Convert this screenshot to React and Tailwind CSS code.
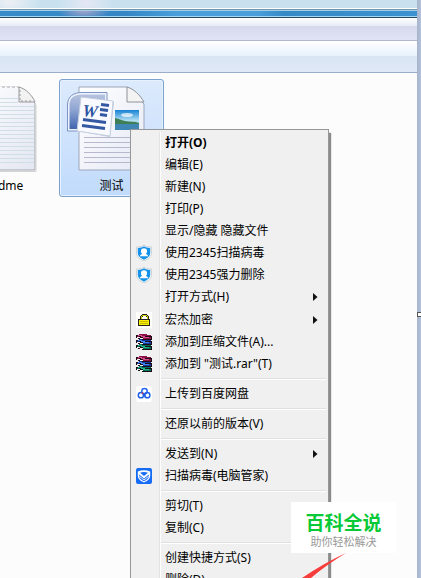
import React from "react";

function ShieldIcon() {
  return (
    <svg width="16" height="16" viewBox="0 0 16 16" aria-hidden="true">
      <path d="M8 .3C6 1.700 3.400 2.100 .7 2v6.200c0 3.500 3 6 7.300 7.600 4.300-1.600 7.300-4.100 7.300-7.600V2C12.600 2.100 10 1.700 8 .3z" fill="#fff" stroke="#b3bec6" strokeWidth=".7" />
      <path d="M8 1.300C6.300 2.500 4.200 2.900 1.800 2.900v5.200c0 3 2.500 5.100 6.200 6.600 3.700-1.500 6.200-3.600 6.200-6.600V2.900C11.800 2.900 9.700 2.500 8 1.300z" fill="#1593ea" />
      <path d="M8 3.300c-1.900 0-3.100 1.200-3.100 3 0 1 .4 1.900 1.100 2.500-.2 1-2.100 1-2.300 2.500h8.600c-.2-1.500-2.100-1.500-2.300-2.500.7-.6 1.100-1.500 1.100-2.500C11.100 4.500 9.900 3.300 8 3.300z" fill="#fff" />
    </svg>
  );
}

function LockIcon() {
  return (
    <svg width="16" height="16" viewBox="0 0 16 16" shapeRendering="crispEdges" aria-hidden="true">
      <rect width="16" height="16" fill="#fff" />
      <path d="M4 8V4h1V3h1V2h5v1h1v1h1v4h-2V5h-1V4H7v1H6v3z" fill="#222" />
      <path d="M5 7V4h1V3h5v1h1v3h-1V4H6v3z" fill="#d8d400" />
      <rect x="2" y="7" width="12" height="7" fill="#222" />
      <rect x="3" y="8" width="10" height="5" fill="#f8f000" />
      <path d="M4 9h8v1H4zm0 2h8v1H4z" fill="#c4b800" />
    </svg>
  );
}

const books = [
  { y: 10, cover: "#00705a", light: "#20b48c" },
  { y: 5, cover: "#1438a0", light: "#3f86f0" },
  { y: 0, cover: "#8c1048", light: "#d8488c" },
];

function BooksIcon() {
  return (
    <svg width="16" height="16" viewBox="0 0 16 16" shapeRendering="crispEdges" aria-hidden="true">
      {books.map((b) => (
        <g key={b.y} transform={`translate(0 ${b.y})`}>
          <path d="M0 1h3V0h8v1h4v1h1v4H6V5H2V4H0z" fill="#1a0d14" />
          <path d="M3 0h8v1h4v1H6V1H3z" fill={b.cover} />
          <path d="M2 1h4v1h3v1H5V2H2z" fill={b.light} />
          <path d="M1 3h3v1h3v1H4V4H1z" fill="#f3f0ea" />
          <path d="M1 2h2v1H1z" fill={b.cover} />
          <path d="M7 3h8v2H7z" fill={b.cover} />
          <path d="M7 3h6v1H7z" fill={b.light} />
        </g>
      ))}
    </svg>
  );
}

function NetdiskIcon() {
  return (
    <svg width="16" height="16" viewBox="0 0 16 16" fill="none" aria-hidden="true">
      <rect width="16" height="16" rx="3" fill="#fff" />
      <circle cx="8.500" cy="5.300" r="2.700" stroke="#2468f2" strokeWidth="1.500" />
      <circle cx="4.900" cy="9.200" r="2.600" stroke="#1f5fe8" strokeWidth="1.500" />
      <circle cx="11.300" cy="9.200" r="2.600" stroke="#1f5fe8" strokeWidth="1.500" />
      <path d="m6.600 7.300 3.200 3.600" stroke="#1f5fe8" strokeWidth="1.300" />
      <circle cx="6.500" cy="7.100" r=".9" fill="#ee3b4d" />
    </svg>
  );
}

function ManagerIcon() {
  return (
    <svg width="16" height="16" viewBox="0 0 16 16" fill="none" aria-hidden="true">
      <rect width="16" height="16" rx="2" fill="#176cf5" />
      <path d="M1.800 3.500Q8 1 14.200 3.500v4.300c0 3-2.800 5.200-6.200 6.600-3.400-1.400-6.200-3.600-6.200-6.600z" fill="#fff" />
      <path d="M4 4.800Q8 3.200 12 4.800L8 7.900z" fill="#176cf5" />
      <path d="M3.200 6.600 8 10.600l4.800-4v1.700c0 2.100-2 3.700-4.800 4.900-2.800-1.200-4.800-2.800-4.800-4.900z" fill="#176cf5" />
      <path d="M3.400 8.300 8 12l4.600-3.700" stroke="#fff" strokeWidth=".9" />
    </svg>
  );
}

function TextFileIcon() {
  return (
    <svg width="84" height="92" viewBox="0 0 84 92" aria-hidden="true">
      <defs>
        <linearGradient id="paper" x1="0" y1="0" x2="1" y2="1">
          <stop offset="0" stopColor="#fff" />
          <stop offset="1" stopColor="#e4e6f2" />
        </linearGradient>
      </defs>
      <path d="M9 4h50l16 16v67H9z" fill="url(#paper)" stroke="#a3a6ac" />
      <path d="M10 88.500h66V22" fill="none" stroke="#d3d3d5" />
      {[15, 19, 23, 27, 31, 35, 39, 43, 47, 51, 55, 59, 63, 67, 71, 75, 79].map((y) => (
        <path key={y} d={`M10 ${y + 0.5}h${y < 22 ? 48 : 64}`} stroke="#cfdfe8" />
      ))}
      <path d="M10 4.500h48" stroke="#fcfcfc" strokeWidth="2" strokeDasharray="2 3" />
      <path d="M59 4v15h16C72 12 66 6 59 4z" fill="#f2f2f3" stroke="#97999d" />
      <path d="M60 7v11h12" fill="none" stroke="#999" strokeDasharray="2 2" />
    </svg>
  );
}

function WordFileIcon() {
  return (
    <svg width="84" height="92" viewBox="0 0 84 92" aria-hidden="true">
      <defs>
        <linearGradient id="sheet" x1="0" y1="0" x2="1" y2="1">
          <stop offset="0" stopColor="#fff" />
          <stop offset="1" stopColor="#e6e9f6" />
        </linearGradient>
        <linearGradient id="badge" x1="0" y1="0" x2="0" y2="1">
          <stop offset="0" stopColor="#b9c5e0" />
          <stop offset=".45" stopColor="#8ea4d2" />
          <stop offset="1" stopColor="#3c62ae" />
        </linearGradient>
        <linearGradient id="sky" x1="0" y1="0" x2="0" y2="1">
          <stop offset="0" stopColor="#1681d4" />
          <stop offset=".55" stopColor="#b8e3f4" />
          <stop offset="1" stopColor="#5fa8c8" />
        </linearGradient>
      </defs>
      <path d="M9 4h48l17 17v66H9z" fill="url(#sheet)" stroke="#9ca7b8" />
      {[54, 59, 64, 69, 74, 79].map((y) => (
        <path key={y} d={`M14 ${y + 0.5}h55`} stroke="#b6b9cc" />
      ))}
      <path d="M57 4v15h17C70 12 64 6 57 4z" fill="#f3f3f4" stroke="#8f9298" />
      <rect x="45" y="27" width="24" height="20" fill="url(#sky)" />
      <ellipse cx="57" cy="32" rx="6" ry="2" fill="#fff" opacity=".7" />
      <path d="M45 35c4 1 6 2 10 3 5 1 10 0 14 2v1H45z" fill="#3f7f55" />
      <path d="M45 41h24v6H45z" fill="#3f86b4" />
      <path d="M-1.500 47V22C-1.500 14 4 10.500 12 10.500h24V47z" fill="url(#badge)" stroke="#eef4ff" strokeWidth="2" />
      <path d="M-2.500 48V22C-2.500 13 4 9.500 12 9.500h25V18M-2.500 48H8" fill="none" stroke="#7d93c2" />
      <path d="m12 15 32 4-4 35-33-6z" fill="#8295b7" opacity=".5" />
      <path d="m11 14 32 4-3 35-33-5z" fill="#f8faff" stroke="#c5cede" />
      <text x="12" y="33" fill="#2a52a0" className="text-[17px] font-bold italic [font-family:'Liberation_Serif',serif]" transform="rotate(6 12 33)">W</text>
      <path d="m31 21.500 8 1m-9 4 8 1m-8 4 7 1m-24 4 23 3m-24 3 23 3" stroke="#3458a2" strokeWidth="3" />
    </svg>
  );
}

function FileTile({ name, icon, selected }) {
  return (
    <button
      type="button"
      className={`flex h-[118px] w-[105px] shrink-0 flex-col items-center rounded-[3px] border ${
        selected
          ? "border-[#7da2ce] bg-linear-to-b from-[#dceafc] to-[#c1dbfc] shadow-[inset_0_0_0_1px_#e6f1fe]"
          : "border-transparent"
      }`}
    >
      <span className="mt-[3px] [&_svg]:block [&_svg]:overflow-visible">{icon}</span>
      <span className="mt-[3px] leading-4">{name}</span>
    </button>
  );
}

const menu = [
  { label: "打开(O)", bold: true },
  { label: "编辑(E)" },
  { label: "新建(N)" },
  { label: "打印(P)" },
  { label: "显示/隐藏 隐藏文件" },
  { label: "使用2345扫描病毒", icon: <ShieldIcon /> },
  { label: "使用2345强力删除", icon: <ShieldIcon /> },
  { label: "打开方式(H)", sub: true },
  { label: "宏杰加密", icon: <LockIcon />, sub: true, tall: true },
  { label: "添加到压缩文件(A)...", icon: <BooksIcon /> },
  { label: '添加到 "测试.rar"(T)', icon: <BooksIcon /> },
  null,
  { label: "上传到百度网盘", icon: <NetdiskIcon /> },
  null,
  { label: "还原以前的版本(V)" },
  null,
  { label: "发送到(N)", sub: true },
  { label: "扫描病毒(电脑管家)", icon: <ManagerIcon /> },
  null,
  { label: "剪切(T)" },
  { label: "复制(C)" },
  null,
  { label: "创建快捷方式(S)" },
  { label: "删除(D)" },
];

function Gutter({ children }) {
  return (
    <span className="flex w-[30px] shrink-0 items-center border-r border-white pl-[5px] shadow-[inset_-1px_0_0_#e2e3e3]">
      {children}
    </span>
  );
}

function ContextMenu() {
  return (
    <div
      role="menu"
      className="absolute top-[129px] left-[130px] w-[199px] border border-[#979797] bg-[#f0f0f0] py-[2px] shadow-[2px_4px_1px_#8b8b8b]"
    >
      {menu.map((item, i) =>
        item ? (
          <button
            key={i}
            type="button"
            role="menuitem"
            className={`flex w-full items-stretch text-left ${item.tall ? "h-[23px]" : "h-[22px]"}`}
          >
            <Gutter>{item.icon}</Gutter>
            <span className={`flex flex-1 items-center pl-1 whitespace-nowrap ${item.bold ? "font-bold" : ""}`}>
              {item.label}
            </span>
            {item.sub && (
              <svg className="mr-[10px] self-center" width="5" height="8" viewBox="0 0 5 8" aria-hidden="true">
                <path d="M0 0v8l4.500-4z" fill="#111" />
              </svg>
            )}
          </button>
        ) : (
          <div key={i} role="separator" className="flex h-2">
            <Gutter />
            <span className="mt-[3px] mr-[2px] h-[2px] flex-1 border-t border-b border-t-[#e0e0e0] border-b-white" />
          </div>
        )
      )}
    </div>
  );
}

function WindowChrome() {
  return (
    <header className="shrink-0">
      <div className="h-2 bg-[radial-gradient(ellipse_30px_16px_at_10px_2px,#edf0f4,transparent),radial-gradient(ellipse_28px_18px_at_86px_3px,#e5e7f4,transparent)] bg-[#c9e1ef]" />
      <div className="h-[10px] border-t border-b border-t-white border-b-[#254a62]">
        <div className="h-2 border-t border-b border-t-[#7195aa] border-b-[#a7d5f4]">
          <div className="h-[6px] border-t border-[#a5cfe8] bg-[radial-gradient(ellipse_26px_9px_at_84px_0px,#a5a5ca,transparent),linear-gradient(90deg,#388bc8_0%,#3686c5_30%,#4a9eda_42%,#4a9eda_62%,#368ac5_68%,#3c91d0_100%)]" />
        </div>
      </div>
      <div className="h-2 bg-linear-to-b from-white to-[#e7ebf4]" />
      <div className="h-[15px] border-b border-[#b3b5cc] bg-linear-to-b from-[#d5d9eb] to-[#e1e4f6]" />
      <div className="h-[15px] bg-linear-to-b from-white to-[#e7f2fc]" />
      <div className="h-[17px] border-b border-[#9caccb] bg-linear-to-b from-[#dae5f3] to-[#dfe9f7]" />
    </header>
  );
}

export default function App() {
  return (
    <div className="relative flex h-screen overflow-hidden bg-[#fcfcfc] text-[12px] text-black [font-family:'Noto_Sans','Noto_Sans_CJK_SC',sans-serif]">
      <div className="flex min-w-0 flex-1 flex-col">
        <WindowChrome />
        <main className="-ml-[51px] flex gap-[5px] pt-[6px]">
          <FileTile name="readme" icon={<TextFileIcon />} />
          <FileTile name="测试" icon={<WordFileIcon />} selected />
        </main>
      </div>
      <div className="w-1 shrink-0 bg-linear-to-r from-[#a5b3cc] to-[#b4c3d9]" />
      <ContextMenu />
      <span className="absolute top-[312px] right-0 h-[5px] w-1 border border-r-0 border-[#555] bg-white" />
      <aside className="absolute top-[502px] left-[291px] flex w-[105px] flex-col items-center bg-white pt-2 pb-[5px] [font-family:'Noto_Sans_CJK_SC',sans-serif]">
        <strong className="text-[19px] leading-6 font-bold text-[#08c936]">百科全说</strong>
        <span className="text-[11px] leading-[14px] text-[#999]">助你轻松解决</span>
      </aside>
      <svg className="absolute top-[552px] left-[300px]" width="48" height="26" viewBox="0 0 48 26" aria-hidden="true">
        <path d="M46 1Q24 11 2 26h9Q26 13 46 1z" fill="#f83b3b" />
      </svg>
    </div>
  );
}
